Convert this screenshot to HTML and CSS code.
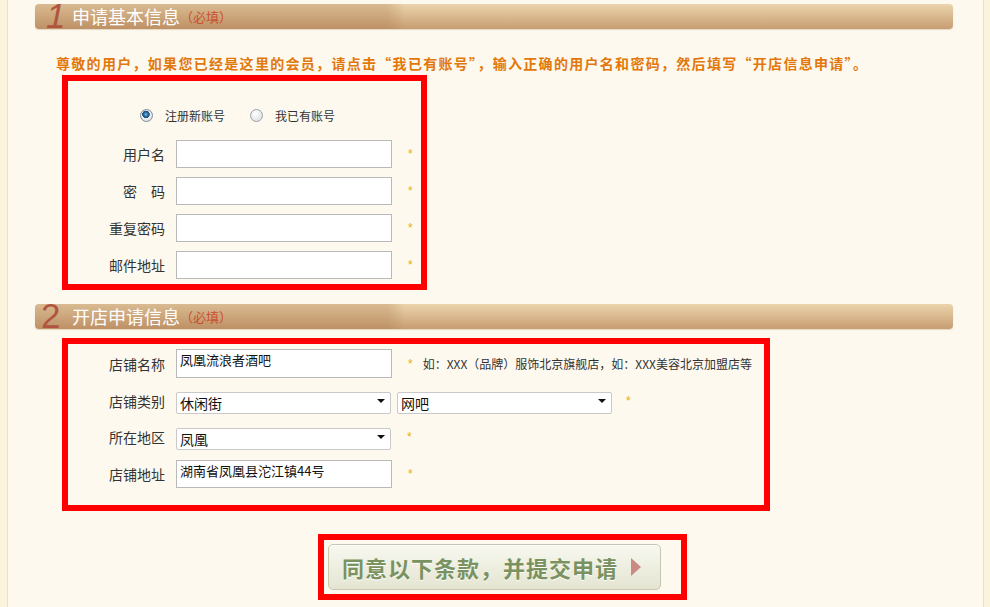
FILE: index.html
```html
<!DOCTYPE html>
<html lang="zh-CN">
<head>
  <meta charset="UTF-8">
  <title>开店申请</title>
  <link rel="stylesheet" href="styles.css">
</head>
<body>

<div class="page">
  <div class="sec-head">
    <span class="num num-1">1</span>
    <span class="sec-title">申请基本信息</span>
    <span class="must">（必填）</span>
  </div>

  <p class="notice">尊敬的用户，如果您已经是这里的会员，请点击“我已有账号”，输入正确的用户名和密码，然后填写“开店信息申请”。</p>

  <div class="mark mark-account">
    <div class="radios">
      <input type="radio" name="acct" id="acct-new" class="radio" checked>
      <label for="acct-new" class="radio-text">注册新账号</label>
      <input type="radio" name="acct" id="acct-old" class="radio">
      <label for="acct-old" class="radio-text">我已有账号</label>
    </div>
    <div class="row">
      <label class="lbl">用户名</label>
      <input type="text" class="txt">
      <span class="star">*</span>
    </div>
    <div class="row">
      <label class="lbl">密　码</label>
      <input type="password" class="txt">
      <span class="star">*</span>
    </div>
    <div class="row">
      <label class="lbl">重复密码</label>
      <input type="password" class="txt">
      <span class="star">*</span>
    </div>
    <div class="row">
      <label class="lbl">邮件地址</label>
      <input type="text" class="txt">
      <span class="star">*</span>
    </div>
  </div>

  <div class="sec-head sec-head-2">
    <span class="num num-2">2</span>
    <span class="sec-title">开店申请信息</span>
    <span class="must">（必填）</span>
  </div>

  <div class="mark mark-shop">
    <div class="row row-name">
      <label class="lbl">店铺名称</label>
      <textarea class="area" rows="1">凤凰流浪者酒吧</textarea>
      <span class="star">*</span>
      <span class="hint">如：XXX（品牌）服饰北京旗舰店，如：XXX美容北京加盟店等</span>
    </div>
    <div class="row row-sel row-type">
      <label class="lbl">店铺类别</label>
      <span class="select"><select><option>休闲街</option></select></span>
      <span class="select select-2"><select><option>网吧</option></select></span>
      <span class="star">*</span>
    </div>
    <div class="row row-sel row-area">
      <label class="lbl">所在地区</label>
      <span class="select"><select><option>凤凰</option></select></span>
      <span class="star">*</span>
    </div>
    <div class="row row-addr">
      <label class="lbl">店铺地址</label>
      <textarea class="area" rows="1">湖南省凤凰县沱江镇44号</textarea>
      <span class="star">*</span>
    </div>
  </div>

  <div class="mark mark-submit">
    <button type="button" class="submit">同意以下条款，并提交申请<span class="arrow"></span></button>
  </div>
</div>

</body>
</html>
```

FILE: styles.css
```css
body {
  margin: 0;
  background: #fcf3dc;
  font-family: "Noto Sans CJK SC", sans-serif;
  color: #333;
  overflow: hidden;
}

.page {
  margin: 0 6px 0 7px;
  padding-top: 4px;
  height: 607px;
  box-sizing: border-box;
  background: #fdf9ee;
  border-left: 1px solid #f1dfb6;
  border-right: 1px solid #f1dfb6;
}

/* section title bars */
.sec-head {
  display: flex;
  align-items: center;
  margin-left: 27px;
  width: 918px;
  height: 25px;
  border-radius: 4px;
  background:
    linear-gradient(to right, rgba(160, 105, 60, 0.24) 0, rgba(160, 105, 60, 0.24) 352px, rgba(160, 105, 60, 0) 370px),
    linear-gradient(to bottom, #ebd4ac, #c89d72);
  box-shadow: 0 1px 1px rgba(150, 110, 70, 0.25);
}

.sec-head-2 {
  margin-top: 14px;
}

.num {
  font-family: "Liberation Sans", sans-serif;
  font-size: 35px;
  line-height: 25px;
  color: #b0553f;
  margin-bottom: 2px;
}

.num-1 {
  font-style: italic;
  margin-left: 11px;
  width: 26px;
}

.num-2 {
  margin-left: 6px;
  width: 31px;
}

.sec-title {
  color: #fff;
  font-size: 18px;
  line-height: 25px;
}

.must {
  color: #c9502d;
  font-size: 13px;
  line-height: 25px;
}

.notice {
  margin: 24px 0 2px 48px;
  font-size: 14px;
  line-height: 20px;
  font-weight: bold;
  letter-spacing: 1.3px;
  color: #e2780c;
}

/* red highlight frames */
.mark {
  margin-left: 54px;
  border: 6px solid #ff0000;
  box-sizing: border-box;
}

.mark-account {
  width: 365px;
  height: 215px;
  padding-top: 26px;
}

.mark-shop {
  margin-top: 9px;
  width: 708px;
  height: 173px;
  padding-top: 5px;
}

.mark-submit {
  margin: 23px 0 0 310px;
  width: 369px;
  height: 66px;
  padding: 4px;
}

/* radio choice */
.radios {
  display: flex;
  align-items: center;
  height: 16px;
  padding-left: 72px;
  margin-bottom: 17px;
  font-size: 12px;
}

.radio {
  appearance: none;
  width: 13px;
  height: 13px;
  margin: 0 12px 0 0;
  border-radius: 50%;
  border: 1px solid #9aa3ab;
  box-sizing: border-box;
  background: radial-gradient(circle at 40% 35%, #ffffff, #d6d9dc);
}

.radio:checked {
  border-color: #7d8c99;
  background:
    radial-gradient(circle at 45% 40%, #7fb7e0 0, #1f5f94 2.5px, #1a4f80 3.5px, rgba(0, 0, 0, 0) 4px),
    radial-gradient(circle at 40% 35%, #ffffff, #d6d9dc);
}

.radio-text {
  margin-right: 25px;
}

/* form rows */
.row {
  display: flex;
  align-items: center;
  height: 28px;
  margin-bottom: 9px;
}

.lbl {
  width: 97px;
  padding-right: 11px;
  box-sizing: content-box;
  text-align: right;
  font-size: 14px;
  flex-shrink: 0;
}

.txt {
  width: 216px;
  height: 28px;
  box-sizing: border-box;
  margin: 0;
  border: 1px solid #b9b9b9;
  background: #fff;
  font-family: inherit;
  font-size: 13px;
  padding: 0 4px;
}

.star {
  margin-left: 16px;
  color: #e8b000;
  font-size: 12px;
  font-family: "Liberation Sans", sans-serif;
}

.mark-shop .row-name {
  height: 29px;
  margin-bottom: 12px;
}

.mark-shop .row-sel {
  height: 22px;
}

.mark-shop .row-type {
  margin-bottom: 14px;
}

.mark-shop .row-area {
  margin-bottom: 12px;
}

.area {
  width: 216px;
  height: 100%;
  box-sizing: border-box;
  margin: 0;
  border: 1px solid #b9b9b9;
  background: #fff;
  padding: 1px 3px;
  resize: none;
  overflow: hidden;
  font-family: inherit;
  font-size: 13px;
  line-height: 17px;
  color: #111;
}

.hint {
  margin-left: 10px;
  font-size: 12px;
  color: #333;
}

/* dropdowns */
.select {
  position: relative;
  display: block;
  width: 215px;
  height: 22px;
}

.select-2 {
  margin-left: 6px;
}

.select select {
  appearance: none;
  width: 100%;
  height: 100%;
  margin: 0;
  border: 1px solid #c9c9c9;
  border-radius: 2px;
  background: #fff;
  padding: 0 20px 0 3px;
  font-family: inherit;
  font-size: 14px;
  color: #111;
}

.select::after {
  content: "";
  position: absolute;
  right: 6px;
  top: 9px;
  border-left: 4px solid transparent;
  border-right: 4px solid transparent;
  border-top: 4px solid #111;
  pointer-events: none;
}

.row-type .star {
  margin-left: 14px;
}

/* submit button */
.submit {
  display: flex;
  align-items: center;
  width: 333px;
  height: 46px;
  padding: 0 0 0 13px;
  border: 1px solid #c6c7b2;
  border-radius: 5px;
  background: linear-gradient(to bottom, #f8f8f0, #e4e5d1);
  box-shadow: inset 0 1px 0 #fff;
  font-family: inherit;
  font-size: 22px;
  font-weight: bold;
  letter-spacing: 1px;
  color: #7a9260;
  text-shadow: 0 1px 0 #fff;
  cursor: pointer;
}

.arrow {
  margin-left: 13px;
  border-top: 9px solid transparent;
  border-bottom: 9px solid transparent;
  border-left: 10px solid #c98b84;
}
```
